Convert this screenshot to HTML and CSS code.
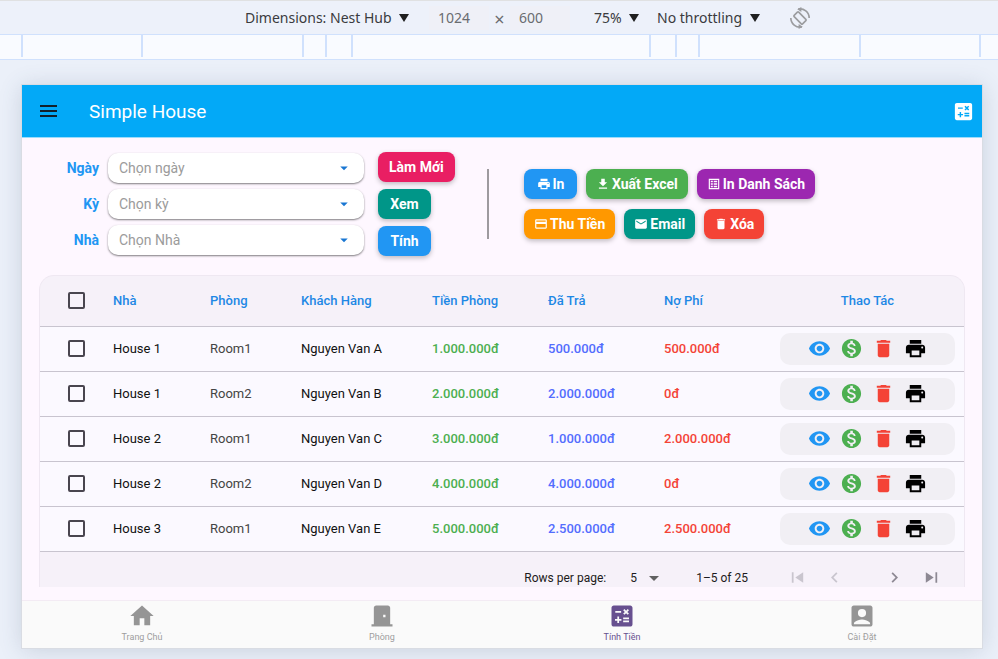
FILE: index.html
```html
<!DOCTYPE html>
<html lang="vi">
<head>
<meta charset="utf-8">
<meta name="viewport" content="width=device-width, initial-scale=1">
<title>Simple House</title>
<link rel="stylesheet" href="styles.css">
</head>
<body>
<svg class="sprite" aria-hidden="true">
  <symbol id="calc" viewBox="0 0 24 24"><path d="M19 3H5c-1.1 0-2 .9-2 2v14c0 1.1.9 2 2 2h14c1.1 0 2-.9 2-2V5c0-1.1-.9-2-2-2zm-5.97 4.06L14.09 6l1.41 1.41L16.91 6l1.06 1.06-1.41 1.41 1.41 1.41-1.06 1.06-1.41-1.4-1.41 1.41-1.06-1.06 1.41-1.41-1.41-1.42zm-6.78.66h5v1.5h-5v-1.5zM11.5 16h-2v2H8v-2H6v-1.5h2v-2h1.5v2h2V16zm6.5 1.25h-5v-1.5h5v1.5zm0-2.5h-5v-1.5h5v1.5z"/></symbol>
  <symbol id="eye" viewBox="0 0 24 24"><path d="M12 4.5C7 4.5 2.73 7.61 1 12c1.73 4.39 6 7.5 11 7.5s9.27-3.11 11-7.5c-1.73-4.39-6-7.5-11-7.5zM12 17c-2.76 0-5-2.24-5-5s2.24-5 5-5 5 2.24 5 5-2.24 5-5 5zm0-8c-1.66 0-3 1.34-3 3s1.34 3 3 3 3-1.34 3-3-1.34-3-3-3z"/></symbol>
  <symbol id="money" viewBox="0 0 24 24"><path d="M12 2C6.48 2 2 6.48 2 12s4.48 10 10 10 10-4.48 10-10S17.52 2 12 2zm1.41 16.09V20h-2.67v-1.93c-1.71-.36-3.16-1.46-3.27-3.4h1.96c.1 1.05.82 1.87 2.65 1.87 1.96 0 2.4-.98 2.4-1.59 0-.83-.44-1.61-2.67-2.14-2.48-.6-4.18-1.62-4.18-3.67 0-1.72 1.39-2.84 3.11-3.21V4h2.67v1.95c1.86.45 2.79 1.86 2.85 3.39H14.3c-.05-1.11-.64-1.87-2.22-1.87-1.5 0-2.4.68-2.4 1.64 0 .84.65 1.39 2.67 1.91s4.18 1.39 4.18 3.91c-.01 1.83-1.38 2.83-3.12 3.16z"/></symbol>
  <symbol id="trash" viewBox="0 0 24 24"><path d="M6 19c0 1.1.9 2 2 2h8c1.1 0 2-.9 2-2V7H6v12zM19 4h-3.5l-1-1h-5l-1 1H5v2h14V4z"/></symbol>
  <symbol id="print" viewBox="0 0 24 24"><path d="M19 8H5c-1.66 0-3 1.34-3 3v6h4v4h12v-4h4v-6c0-1.66-1.34-3-3-3zm-3 11H8v-5h8v5zm3-7c-.55 0-1-.45-1-1s.45-1 1-1 1 .45 1 1-.45 1-1 1zm-1-9H6v4h12V3z"/></symbol>
  <symbol id="download" viewBox="0 0 24 24"><path d="M19 9h-4V3H9v6H5l7 7 7-7zM5 18v2h14v-2H5z"/></symbol>
  <symbol id="list" viewBox="0 0 24 24"><path fill-rule="evenodd" d="M3 3h18v18H3zM5 5v14h14V5zM6.500 6.500h3.500v2.500H6.500zM11.500 6.500h6v2.500h-6zM6.500 10.800h3.500v2.500H6.500zM11.500 10.800h6v2.500h-6zM6.500 15h3.500v2.500H6.500zM11.500 15h6v2.500h-6z"/></symbol>
  <symbol id="card" viewBox="0 0 24 24"><path d="M20 4H4c-1.11 0-1.99.89-1.99 2L2 18c0 1.11.89 2 2 2h16c1.11 0 2-.89 2-2V6c0-1.11-.89-2-2-2zm0 14H4v-6h16v6zm0-10H4V6h16v2z"/></symbol>
  <symbol id="mail" viewBox="0 0 24 24"><path d="M20 4H4c-1.1 0-1.99.9-1.99 2L2 18c0 1.1.9 2 2 2h16c1.1 0 2-.9 2-2V6c0-1.1-.9-2-2-2zm0 4l-8 5-8-5V6l8 5 8-5v2z"/></symbol>
  <symbol id="home" viewBox="0 0 24 24"><path d="M10 20v-6h4v6h5v-8h3L12 3 2 12h3v8z"/></symbol>
  <symbol id="door" viewBox="0 0 24 24"><path d="M19 19V5c0-1.1-.9-2-2-2H7c-1.1 0-2 .9-2 2v14H3v2h18v-2h-2zm-4-6h-2v-2h2v2z"/></symbol>
  <symbol id="account" viewBox="0 0 24 24"><path fill-rule="evenodd" d="M19 3H5c-1.1 0-2 .9-2 2v14c0 1.1.9 2 2 2h14c1.1 0 2-.9 2-2V5c0-1.1-.9-2-2-2zM12 6a3.5 3.5 0 1 0 0 7 3.5 3.5 0 0 0 0-7zM19 19H5v-.23c0-.62.28-1.2.76-1.58C7.47 15.82 9.64 15 12 15s4.53.82 6.24 2.19c.48.38.76.97.76 1.58V19z"/></symbol>
  <symbol id="caret" viewBox="0 0 10 8"><path d="M0 0h10L5 8z"/></symbol>
  <symbol id="drop" viewBox="0 0 24 24"><path d="M7 10l5 5 5-5z"/></symbol>
  <symbol id="first" viewBox="0 0 24 24"><path d="M5.500 6h2v12h-2zM18.500 6v12L9.500 12z"/></symbol>
  <symbol id="last" viewBox="0 0 24 24"><path d="M16.500 6h2v12h-2zM5.500 6v12l9-6z"/></symbol>
  <symbol id="prev" viewBox="0 0 24 24"><path d="M15.410 7.410L14 6l-6 6 6 6 1.410-1.410L10.830 12z"/></symbol>
  <symbol id="next" viewBox="0 0 24 24"><path d="M10 6L8.590 7.410 13.170 12l-4.580 4.590L10 18l6-6z"/></symbol>
  <symbol id="rotate" viewBox="0 0 24 24"><g fill="none" stroke="currentColor" stroke-width="1.800"><rect x="8.500" y="5.500" width="7" height="13" rx="1" transform="rotate(-45 12 12)"/><path d="M10 2.200A10 10 0 0 1 22 12M14 21.800A10 10 0 0 1 2 12"/></g><path d="M9 2.500L13.500 0v5.500zM15 21.500L10.500 24v-5.500z"/></symbol>
</svg>

<header class="devbar">
  <label class="pick"><select aria-label="Device"><option>Dimensions: Nest Hub</option></select><svg class="caret"><use href="#caret"/></svg></label>
  <div class="size">
    <input type="text" value="1024" aria-label="Width">
    <span class="times">×</span>
    <input type="text" value="600" aria-label="Height">
  </div>
  <label class="pick"><select aria-label="Zoom"><option>75%</option></select><svg class="caret"><use href="#caret"/></svg></label>
  <label class="pick throttle"><select aria-label="Throttling"><option>No throttling</option></select><svg class="caret"><use href="#caret"/></svg></label>
  <button class="rotate" type="button" aria-label="Rotate"><svg><use href="#rotate"/></svg></button>
</header>
<div class="ruler"><i></i><i></i><i></i><i></i><i></i><i></i><i></i><i></i><i></i><i></i></div>

<div class="stage">
<div class="app">
  <div class="appbar">
    <button class="menu" type="button" aria-label="Menu"><span></span><span></span><span></span></button>
    <h1>Simple House</h1>
    <button class="calc" type="button" aria-label="Máy tính"><svg><use href="#calc"/></svg></button>
  </div>

  <main>
    <section class="tools">
      <form class="filters">
        <label for="day">Ngày</label>
        <div class="field"><select id="day"><option>Chọn ngày</option></select><svg><use href="#drop"/></svg></div>
        <label for="term">Kỳ</label>
        <div class="field"><select id="term"><option>Chọn kỳ</option></select><svg><use href="#drop"/></svg></div>
        <label for="house">Nhà</label>
        <div class="field"><select id="house"><option>Chọn Nhà</option></select><svg><use href="#drop"/></svg></div>
      </form>
      <div class="stack">
        <button class="btn pink" type="button">Làm Mới</button>
        <button class="btn teal" type="button">Xem</button>
        <button class="btn blue" type="button">Tính</button>
      </div>
      <div class="divider"></div>
      <div class="actions">
        <button class="btn blue" type="button"><svg><use href="#print"/></svg>In</button>
        <button class="btn green" type="button"><svg><use href="#download"/></svg>Xuất Excel</button>
        <button class="btn purple" type="button"><svg><use href="#list"/></svg>In Danh Sách</button>
        <button class="btn orange" type="button"><svg><use href="#card"/></svg>Thu Tiền</button>
        <button class="btn teal" type="button"><svg><use href="#mail"/></svg>Email</button>
        <button class="btn red" type="button"><svg><use href="#trash"/></svg>Xóa</button>
      </div>
    </section>

    <section class="card">
      <table>
        <colgroup><col class="c-check"><col class="c-house"><col class="c-room"><col class="c-client"><col class="c-sum"><col class="c-sum"><col class="c-sum"><col class="c-act"></colgroup>
        <thead>
          <tr><th class="check"><input type="checkbox" aria-label="Chọn tất cả"></th><th>Nhà</th><th>Phòng</th><th>Khách Hàng</th><th>Tiền Phòng</th><th>Đã Trả</th><th>Nợ Phí</th><th class="mid">Thao Tác</th></tr>
        </thead>
        <tbody>
          <tr><td class="check"><input type="checkbox" aria-label="Nguyen Van A"></td><td>House 1</td><td class="room">Room1</td><td>Nguyen Van A</td><td class="rent">1.000.000đ</td><td class="paid">500.000đ</td><td class="debt">500.000đ</td><td class="act"><div class="pill"><button type="button" class="view" aria-label="Xem"><svg><use href="#eye"/></svg></button><button type="button" class="pay" aria-label="Thu tiền"><svg><use href="#money"/></svg></button><button type="button" class="del" aria-label="Xóa"><svg><use href="#trash"/></svg></button><button type="button" aria-label="In"><svg><use href="#print"/></svg></button></div></td></tr>
          <tr><td class="check"><input type="checkbox" aria-label="Nguyen Van B"></td><td>House 1</td><td class="room">Room2</td><td>Nguyen Van B</td><td class="rent">2.000.000đ</td><td class="paid">2.000.000đ</td><td class="debt">0đ</td><td class="act"><div class="pill"><button type="button" class="view" aria-label="Xem"><svg><use href="#eye"/></svg></button><button type="button" class="pay" aria-label="Thu tiền"><svg><use href="#money"/></svg></button><button type="button" class="del" aria-label="Xóa"><svg><use href="#trash"/></svg></button><button type="button" aria-label="In"><svg><use href="#print"/></svg></button></div></td></tr>
          <tr><td class="check"><input type="checkbox" aria-label="Nguyen Van C"></td><td>House 2</td><td class="room">Room1</td><td>Nguyen Van C</td><td class="rent">3.000.000đ</td><td class="paid">1.000.000đ</td><td class="debt">2.000.000đ</td><td class="act"><div class="pill"><button type="button" class="view" aria-label="Xem"><svg><use href="#eye"/></svg></button><button type="button" class="pay" aria-label="Thu tiền"><svg><use href="#money"/></svg></button><button type="button" class="del" aria-label="Xóa"><svg><use href="#trash"/></svg></button><button type="button" aria-label="In"><svg><use href="#print"/></svg></button></div></td></tr>
          <tr><td class="check"><input type="checkbox" aria-label="Nguyen Van D"></td><td>House 2</td><td class="room">Room2</td><td>Nguyen Van D</td><td class="rent">4.000.000đ</td><td class="paid">4.000.000đ</td><td class="debt">0đ</td><td class="act"><div class="pill"><button type="button" class="view" aria-label="Xem"><svg><use href="#eye"/></svg></button><button type="button" class="pay" aria-label="Thu tiền"><svg><use href="#money"/></svg></button><button type="button" class="del" aria-label="Xóa"><svg><use href="#trash"/></svg></button><button type="button" aria-label="In"><svg><use href="#print"/></svg></button></div></td></tr>
          <tr><td class="check"><input type="checkbox" aria-label="Nguyen Van E"></td><td>House 3</td><td class="room">Room1</td><td>Nguyen Van E</td><td class="rent">5.000.000đ</td><td class="paid">2.500.000đ</td><td class="debt">2.500.000đ</td><td class="act"><div class="pill"><button type="button" class="view" aria-label="Xem"><svg><use href="#eye"/></svg></button><button type="button" class="pay" aria-label="Thu tiền"><svg><use href="#money"/></svg></button><button type="button" class="del" aria-label="Xóa"><svg><use href="#trash"/></svg></button><button type="button" aria-label="In"><svg><use href="#print"/></svg></button></div></td></tr>
        </tbody>
      </table>
      <div class="pager">
        <label for="rows">Rows per page:</label>
        <div class="rows"><select id="rows"><option>5</option></select><svg><use href="#drop"/></svg></div>
        <span class="range">1–5 of 25</span>
        <div class="pages">
          <button type="button" disabled aria-label="First"><svg><use href="#first"/></svg></button>
          <button type="button" disabled aria-label="Previous"><svg><use href="#prev"/></svg></button>
          <button type="button" class="fwd" aria-label="Next"><svg><use href="#next"/></svg></button>
          <button type="button" aria-label="Last"><svg><use href="#last"/></svg></button>
        </div>
      </div>
    </section>
  </main>

  <nav>
    <a href="#home"><svg><use href="#home"/></svg>Trang Chủ</a>
    <a href="#door"><svg><use href="#door"/></svg>Phòng</a>
    <a href="#calc" class="on"><svg><use href="#calc"/></svg>Tính Tiền</a>
    <a href="#account"><svg><use href="#account"/></svg>Cài Đặt</a>
  </nav>
</div>
</div>
</body>
</html>
```
FILE: styles.css
```css
* { box-sizing: border-box; }
body { margin: 0; min-height: 100vh; background: #ebf0f9; font-family: Roboto, sans-serif; font-size: 13px; color: #111; display: flex; flex-direction: column; }
button, select, input { font: inherit; color: inherit; border: 0; background: none; margin: 0; padding: 0; }
select { appearance: none; outline: 0; }
svg { fill: currentColor; display: block; flex: none; }
.sprite { width: 0; height: 0; position: absolute; }

.devbar { height: 35px; display: flex; align-items: center; justify-content: center; padding-left: 58px; border-top: 1px solid #e0e1e2; border-bottom: 1px solid #d0e1fd; background: #edf1fa; font-family: "Noto Sans", sans-serif; font-size: 14px; color: #3a3b3e; }
.pick { display: flex; align-items: center; gap: 7px; }
.caret { width: 10px; height: 8px; color: #1f1f1f; }
.size { display: flex; align-items: center; color: #6a6c70; margin: 0 24px 0 20px; }
.size input { width: 60px; height: 24px; padding-left: 9px; background: #eff0f7; }
.times { width: 21px; padding-top: 2px; text-align: center; font-size: 18px; line-height: 24px; }
.throttle { margin-left: 18px; }
.rotate { margin-left: 29px; color: #9b9c9f; }
.rotate svg { width: 22px; height: 22px; }

.ruler { height: 25px; padding: 0 17px 2px 21px; display: grid; grid-template-columns: 120fr 161fr 23fr 26fr 298fr 26fr 23fr 161fr 120fr 2px; background: #f9fbff; border-bottom: 1px solid #d0e1fd; }
.ruler i { border-left: 2px solid #d0e1fd; }

.stage { flex: 1; padding: 25px 16px 11px 22px; }
.app { background: #fef7ff; box-shadow: 0 0 0 1px #d9dce3, 0 2px 22px rgba(60, 80, 110, .2); display: flex; flex-direction: column; min-height: 100%; }

.appbar { height: 53px; background: #03a9f7; border-bottom: 1px solid #9cdcfb; display: flex; align-items: center; padding: 0 7px 0 18px; }
.menu { display: grid; gap: 3px; width: 17px; }
.menu span { height: 2px; background: #12202b; }
.appbar h1 { margin: 0 auto 0 32px; font-weight: 400; font-size: 19px; color: #fff; }
.calc { color: #fff; }
.calc svg { width: 23px; height: 23px; }

main { padding: 14px 17px 13px; flex: 1; }
.tools { display: flex; align-items: flex-start; height: 123px; }
.filters { display: grid; grid-template-columns: 60px 256px; column-gap: 9px; row-gap: 6px; padding-top: 1px; align-items: center; }
.filters label { text-align: right; color: #2196f3; font-weight: 700; font-size: 14px; }
.field { position: relative; display: flex; align-items: center; background: #fff; border-radius: 10px; box-shadow: 0 1px 2px rgba(0, 0, 0, .5); height: 30px; }
.field select { flex: 1; height: 100%; padding-left: 11px; color: #9b9b9b; font-size: 14px; }
.field svg { width: 18px; height: 18px; position: absolute; right: 11px; color: #1976d2; pointer-events: none; }
.stack { display: flex; flex-direction: column; align-items: flex-start; gap: 7px; margin-left: 14px; width: 77px; }
.btn { height: 30px; min-width: 53px; padding: 0 11px; border-radius: 8px; color: #fff; font-weight: 700; font-size: 14px; display: flex; align-items: center; justify-content: center; gap: 2px; box-shadow: 0 2px 5px rgba(0, 0, 0, .25); white-space: nowrap; }
.pink { background: #e91e63; }
.teal { background: #009688; }
.blue { background: #2196f3; }
.green { background: #4caf50; }
.purple { background: #9c27b0; }
.orange { background: #ff9800; }
.red { background: #f44336; }
.divider { width: 2px; height: 70px; background: #9e9a9f; margin: 17px 35px 0 32px; }
.actions { display: flex; flex-wrap: wrap; gap: 10px 9px; width: 310px; padding-top: 17px; }
.actions .btn { padding: 0 10px; }
.actions svg { width: 14px; height: 14px; }

.card { border: 1px solid #efe8f2; border-bottom: 0; border-radius: 15px 15px 0 0; overflow: hidden; background: #f6f1f9; }
table { width: 100%; table-layout: fixed; border-collapse: collapse; }
.c-check { width: 73px; }
.c-house { width: 97px; }
.c-room { width: 91px; }
.c-client { width: 131px; }
.c-sum { width: 116px; }
.c-act { width: 184px; }
th, td { padding: 0; text-align: left; border-bottom: 1px solid #c8c4cf; height: 45px; white-space: nowrap; }
th { height: 50px; color: #1e88e5; font-weight: 500; }
td { background: #fbf9ff; }
.check { padding-left: 28px; }
.check input { appearance: none; display: block; width: 17px; height: 17px; border: 2px solid #49454f; border-radius: 2px; }
.mid { padding-right: 9px; text-align: center; }
.room { color: #444; }
.rent, .paid, .debt { font-weight: 500; }
.rent { color: #4caf50; }
.paid { color: #536dfe; }
.debt { color: #f44336; }
.act { padding-right: 9px; }
.pill { height: 32px; border-radius: 10px; background: #f1eff4; display: flex; align-items: center; justify-content: center; gap: 9px; }
.pill svg { width: 23px; height: 23px; }
.pill button { color: #000; }
.pill .view { color: #2196f3; }
.pill .pay { color: #4caf50; }
.pill .del { color: #f44336; }

.pager { height: 35px; padding: 17px 22px 0 0; display: flex; align-items: center; justify-content: flex-end; font-size: 12px; color: #1d1b20; }
.rows { display: flex; align-items: center; gap: 5px; margin: 0 30px 0 24px; }
.rows svg { width: 24px; height: 24px; color: #616161; }
.pages { display: flex; margin-left: 39px; gap: 16px; color: #8d8893; }
.pages svg { width: 21px; height: 21px; }
.pages button:disabled { color: #c9c5ce; }
.fwd { margin-left: 23px; }

nav { height: 48px; display: grid; grid-template-columns: repeat(4, 1fr); background: #fafafa; border-top: 1px solid #f3ebf4; }
nav a { display: flex; flex-direction: column; align-items: center; padding-top: 1px; font-size: 9px; line-height: 14px; color: #9e9e9e; text-decoration: none; }
nav svg { width: 28px; height: 28px; color: #959595; }
nav .on, nav .on svg { color: #67508f; }
```
